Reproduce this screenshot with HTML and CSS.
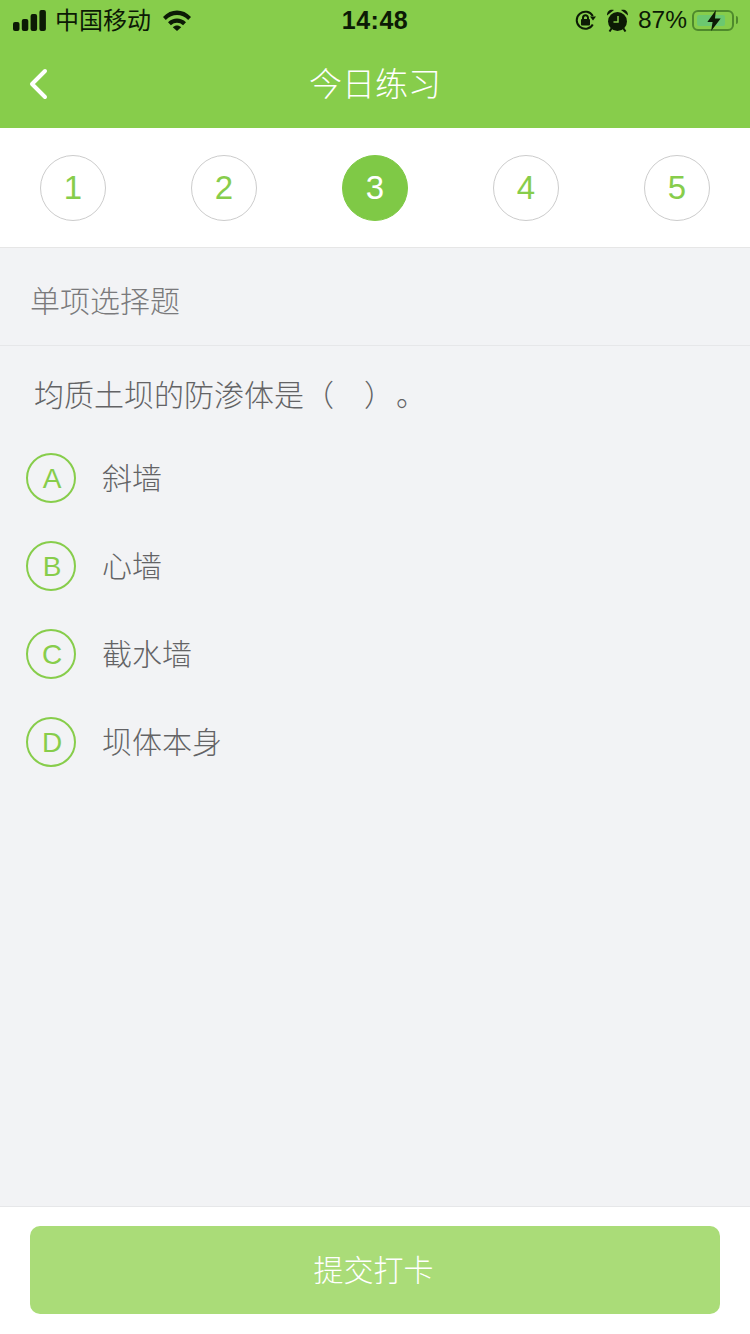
FILE: index.html
```html
<!DOCTYPE html>
<html lang="zh-CN">
<head>
  <meta charset="UTF-8">
  <meta name="viewport" content="width=device-width, initial-scale=1.0">
  <title>今日练习</title>
  <link rel="stylesheet" href="styles.css">
</head>
<body>
  <header class="top">
    <div class="status-bar">
      <div class="status-left">
        <svg class="signal" width="33" height="21" viewBox="0 0 33 21">
          <rect x="0" y="12" width="6.500" height="9" rx="2"/>
          <rect x="8.800" y="9" width="6.500" height="12" rx="2"/>
          <rect x="17.600" y="4" width="6.500" height="17" rx="2"/>
          <rect x="26.400" y="0" width="6.500" height="21" rx="2"/>
        </svg>
        <span class="carrier">中国移动</span>
        <svg class="wifi" width="28" height="21" viewBox="0 0 28 21">
          <path d="M0 7C7.800 -1.600 20.200 -1.600 28 7l-2.800 3C18.800 3.400 9.200 3.400 2.800 10z"/>
          <path d="M5 12.300C10.200 7.300 17.800 7.300 23 12.300l-2.900 3C16.500 12 11.500 12 7.900 15.300z"/>
          <path d="M9.800 17.200c2.600-2.200 5.800-2.200 8.400 0L14 21z"/>
        </svg>
      </div>
      <span class="time">14:48</span>
      <div class="status-right">
        <svg class="lock" width="21" height="21" viewBox="0 0 21 21">
          <path class="lock-ring" d="M17.800 14.500A8.600 8.600 0 1 1 17.800 6"/>
          <path d="M15 6.500h6l-3 4z"/>
          <rect x="6" y="9" width="9" height="6.500" rx="1"/>
          <path class="lock-ring" d="M8 10V7.800a2.500 2.500 0 0 1 5 0V10"/>
        </svg>
        <svg class="alarm" width="21" height="23" viewBox="0 0 21 23">
          <circle cx="10.500" cy="12.500" r="9.500"/>
          <path d="M0 6.500C0 2 3 0 7 1zM21 6.500C21 2 18 0 14 1z"/>
          <path d="M4.500 19.500l-2 3M16.500 19.500l2 3" class="alarm-leg"/>
          <path d="M11 7V13H6.500" class="alarm-hand"/>
        </svg>
        <span class="percent">87%</span>
        <div class="battery">
          <div class="battery-body">
            <div class="battery-fill"></div>
            <svg class="bolt" width="14" height="21" viewBox="0 0 14 22">
              <path d="M9 0L0 12.500h5.500L4 22l10-13H8z"/>
            </svg>
          </div>
          <div class="battery-cap"></div>
        </div>
      </div>
    </div>
    <div class="nav-bar">
      <svg class="back" width="22" height="34" viewBox="0 0 22 34">
        <path d="M17 4L4 17l13 13"/>
      </svg>
      <h1>今日练习</h1>
    </div>
  </header>

  <div class="steps">
    <span class="step">1</span>
    <span class="step">2</span>
    <span class="step active">3</span>
    <span class="step">4</span>
    <span class="step">5</span>
  </div>

  <main class="content">
    <div class="type-title">单项选择题</div>
    <p class="question">均质土坝的防渗体是（<span class="blank"></span>）<span class="stop">。</span></p>
    <ul class="options">
      <li class="option"><span class="letter">A</span><span class="option-text">斜墙</span></li>
      <li class="option"><span class="letter">B</span><span class="option-text">心墙</span></li>
      <li class="option"><span class="letter">C</span><span class="option-text">截水墙</span></li>
      <li class="option"><span class="letter">D</span><span class="option-text">坝体本身</span></li>
    </ul>
  </main>

  <footer class="bottom">
    <button class="submit" type="button">提交打卡</button>
  </footer>
</body>
</html>
```

FILE: styles.css
```css
* {
  box-sizing: border-box;
}

body {
  margin: 0;
  height: 1334px;
  display: flex;
  flex-direction: column;
  overflow: hidden;
  background-color: #f2f3f5;
  font-family: "Liberation Sans", "Noto Sans CJK SC", sans-serif;
  font-weight: 300;
  color: #636365;
}

.top {
  height: 128px;
  background-color: #87cd4b;
}

.status-bar {
  height: 40px;
  padding: 0 12px 0 13px;
  display: flex;
  align-items: center;
  justify-content: space-between;
  position: relative;
  color: #0c1a05;
}

.status-left,
.status-right {
  display: flex;
  align-items: center;
}

.signal,
.wifi,
.lock,
.alarm,
.bolt {
  fill: #0c1a05;
}

.signal {
  margin-right: 9px;
}

.carrier {
  padding-top: 2px;
  font-size: 24px;
  font-weight: 400;
  line-height: 40px;
}

.wifi {
  margin-left: 12px;
}

.time {
  position: absolute;
  left: 0;
  right: 0;
  text-align: center;
  font-size: 25px;
  font-weight: bold;
  letter-spacing: 0.5px;
}

.lock {
  margin-right: 11px;
}

.lock-ring {
  fill: none;
  stroke: #0c1a05;
  stroke-width: 2;
}

.alarm {
  margin-right: 10px;
}

.alarm-leg {
  fill: none;
  stroke: #0c1a05;
  stroke-width: 2;
}

.alarm-hand {
  fill: none;
  stroke: #87cd4b;
  stroke-width: 1.5;
}

.percent {
  font-size: 24.500px;
  font-weight: 400;
  margin-right: 5px;
}

.battery {
  display: flex;
  align-items: center;
}

.battery-body {
  width: 42px;
  height: 21px;
  padding: 3px;
  border: 2px solid #4f8a2c;
  border-radius: 6px;
  position: relative;
}

.battery-fill {
  width: 86%;
  height: 100%;
  border-radius: 2px;
  background-color: #6cc870;
}

.bolt {
  position: absolute;
  left: 13px;
  top: -2px;
}

.battery-cap {
  width: 2px;
  height: 8px;
  margin-left: 2px;
  border-radius: 0 2px 2px 0;
  background-color: #4f8a2c;
}

.nav-bar {
  height: 88px;
  display: flex;
  align-items: center;
  justify-content: center;
  position: relative;
}

.back {
  position: absolute;
  left: 28px;
  top: 27px;
  fill: none;
  stroke: #fff;
  stroke-width: 4;
  stroke-linecap: round;
  stroke-linejoin: round;
}

.nav-bar h1 {
  margin: 0 0 4px;
  font-size: 33px;
  font-weight: 300;
  color: #fff;
}

.steps {
  height: 120px;
  padding: 27px 40px 0;
  display: flex;
  justify-content: space-between;
  background-color: #fff;
  border-bottom: 1px solid #e6e6e6;
}

.step {
  width: 66px;
  height: 66px;
  display: flex;
  align-items: center;
  justify-content: center;
  border: 1px solid #ccc;
  border-radius: 50%;
  font-size: 33px;
  color: #87cd4b;
}

.step.active {
  border-color: #7fc946;
  background-color: #7fc946;
  color: #fff;
}

.content {
  flex: 1;
}

.type-title {
  height: 98px;
  padding: 4px 0 0 30px;
  display: flex;
  align-items: center;
  border-bottom: 1px solid #e6e7e9;
  font-size: 30px;
  color: #7a7a7c;
}

.question {
  margin: 0;
  padding: 28px 0 0 34px;
  font-size: 30px;
  line-height: 44px;
}

.blank {
  display: inline-block;
  width: 30px;
}

.stop {
  margin-left: 17px;
}

.options {
  margin: 0;
  padding: 35px 0 0 26px;
  list-style: none;
}

.option {
  height: 50px;
  margin-bottom: 38px;
  display: flex;
  align-items: center;
  gap: 26px;
  font-size: 30px;
}

.option-text {
  margin-bottom: 4px;
}

.letter {
  width: 50px;
  height: 50px;
  padding: 2px 0 0 2px;
  display: flex;
  align-items: center;
  justify-content: center;
  border: 2px solid #87cd4b;
  border-radius: 50%;
  font-size: 28px;
  color: #87cd4b;
}

.bottom {
  height: 128px;
  padding: 19px 30px 0;
  background-color: #fff;
  border-top: 1px solid #e6e7e9;
}

.submit {
  width: 100%;
  height: 88px;
  padding: 0 3px 4px 0;
  border: none;
  border-radius: 10px;
  background-color: #aadc78;
  font-family: inherit;
  font-size: 30px;
  font-weight: 300;
  color: #fff;
}
```
